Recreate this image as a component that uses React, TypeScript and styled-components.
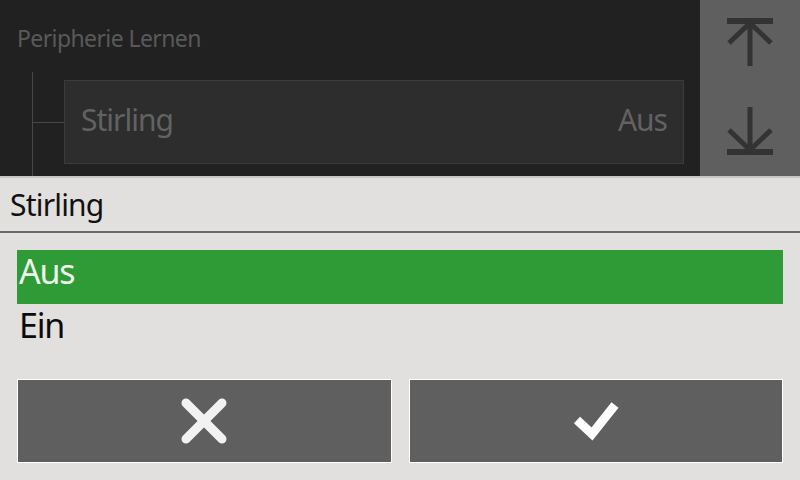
import React from "react";
import styled, { createGlobalStyle } from "styled-components";

const Global = createGlobalStyle`
  html, body { margin: 0; padding: 0; background: #212121; }
  body { font-family: "Noto Sans", "Open Sans", sans-serif; }
  * { box-sizing: border-box; }
`;

const Screen = styled.div`
  width: 800px;
  height: 480px;
  display: flex;
  flex-direction: column;
  overflow: hidden;
`;

const Top = styled.div`
  height: 176px;
  display: flex;
  background: #212121;
`;

const Main = styled.div`
  flex: 1;
  padding: 22px 16px 0 17px;
  display: flex;
  flex-direction: column;
`;

const Heading = styled.div`
  color: #595959;
  font-size: 23px;
  line-height: 32px;
  letter-spacing: -0.6px;
`;

const Tree = styled.div`
  flex: 1;
  display: flex;
  margin-top: 18px;
  margin-left: 15px;
`;

const Branch = styled.div`
  width: 32px;
  border-left: 1px solid #474747;
  position: relative;
  &::after {
    content: "";
    position: absolute;
    left: 0;
    right: 0;
    top: 50px;
    border-top: 1px solid #474747;
  }
`;

const Node = styled.div`
  align-self: flex-start;
  flex: 1;
  margin-top: 8px;
  height: 84px;
  background: #2d2d2d;
  border: 1px solid #3b3b3b;
  display: flex;
  align-items: center;
  justify-content: space-between;
  padding: 0 16px 5px 16px;
  color: #626262;
  font-size: 30px;
  letter-spacing: -1px;
`;

const Side = styled.div`
  width: 100px;
  background: #5f5f5f;
  display: flex;
  flex-direction: column;
`;

const SideButton = styled.div<{ $pad: string }>`
  flex: 1;
  display: flex;
  justify-content: center;
  padding: ${(p) => p.$pad};
`;

const Dialog = styled.div`
  flex: 1;
  background: #e1e0de;
  border-top: 2px solid #c6c6c4;
  display: flex;
  flex-direction: column;
`;

const Title = styled.div`
  height: 55px;
  border-bottom: 2px solid #686868;
  padding: 8px 0 0 10px;
  font-size: 30px;
  line-height: 38px;
  color: #111;
  letter-spacing: -0.8px;
`;

const List = styled.div`
  padding: 17px 17px 0 17px;
  display: flex;
  flex-direction: column;
`;

const Option = styled.div<{ $selected?: boolean }>`
  height: 54px;
  padding: 0 0 12px 2px;
  display: flex;
  align-items: center;
  font-size: 34px;
  letter-spacing: -1.2px;
  background: ${(p) => (p.$selected ? "#2e9b37" : "transparent")};
  color: ${(p) => (p.$selected ? "#eef7ec" : "#0c0c0c")};
`;

const Buttons = styled.div`
  display: grid;
  grid-template-columns: 1fr 1fr;
  gap: 17px;
  padding: 21px 17px 0 17px;
`;

const ActionButton = styled.div`
  height: 84px;
  background: #5f5f5f;
  border: 1px solid #ffffff;
  display: flex;
  align-items: center;
  justify-content: center;
`;

const UpIcon = () => (
  <svg width="46" height="48" viewBox="0 0 46 48">
    <rect x="0" y="0" width="46" height="6" fill="#333333" />
    <line x1="23" y1="4" x2="23" y2="48" stroke="#333333" strokeWidth="5" />
    <polyline points="2,25 23,5 44,25" fill="none" stroke="#333333" strokeWidth="5" />
  </svg>
);

const DownIcon = () => (
  <svg width="46" height="48" viewBox="0 0 46 48">
    <rect x="0" y="42" width="46" height="6" fill="#333333" />
    <line x1="23" y1="0" x2="23" y2="44" stroke="#333333" strokeWidth="5" />
    <polyline points="2,23 23,43 44,23" fill="none" stroke="#333333" strokeWidth="5" />
  </svg>
);

const CloseIcon = () => (
  <svg width="46" height="46" viewBox="0 0 46 46">
    <g stroke="#f2f2f2" strokeWidth="9" strokeLinecap="round">
      <line x1="5" y1="5" x2="41" y2="41" />
      <line x1="41" y1="5" x2="5" y2="41" />
    </g>
  </svg>
);

const CheckIcon = () => (
  <svg width="48" height="44" viewBox="0 0 48 44">
    <polyline
      points="5,21 20,35 43,6"
      fill="none"
      stroke="#ffffff"
      strokeWidth="9"
      strokeLinejoin="miter"
    />
  </svg>
);

export default function App() {
  return (
    <>
      <Global />
      <Screen>
        <Top>
          <Main>
            <Heading>Peripherie Lernen</Heading>
            <Tree>
              <Branch />
              <Node>
                <span>Stirling</span>
                <span>Aus</span>
              </Node>
            </Tree>
          </Main>
          <Side>
            <SideButton $pad="18px 0 0 0">
              <UpIcon />
            </SideButton>
            <SideButton $pad="19px 0 0 0">
              <DownIcon />
            </SideButton>
          </Side>
        </Top>
        <Dialog>
          <Title>Stirling</Title>
          <List>
            <Option $selected>Aus</Option>
            <Option>Ein</Option>
          </List>
          <Buttons>
            <ActionButton>
              <CloseIcon />
            </ActionButton>
            <ActionButton>
              <CheckIcon />
            </ActionButton>
          </Buttons>
        </Dialog>
      </Screen>
    </>
  );
}
